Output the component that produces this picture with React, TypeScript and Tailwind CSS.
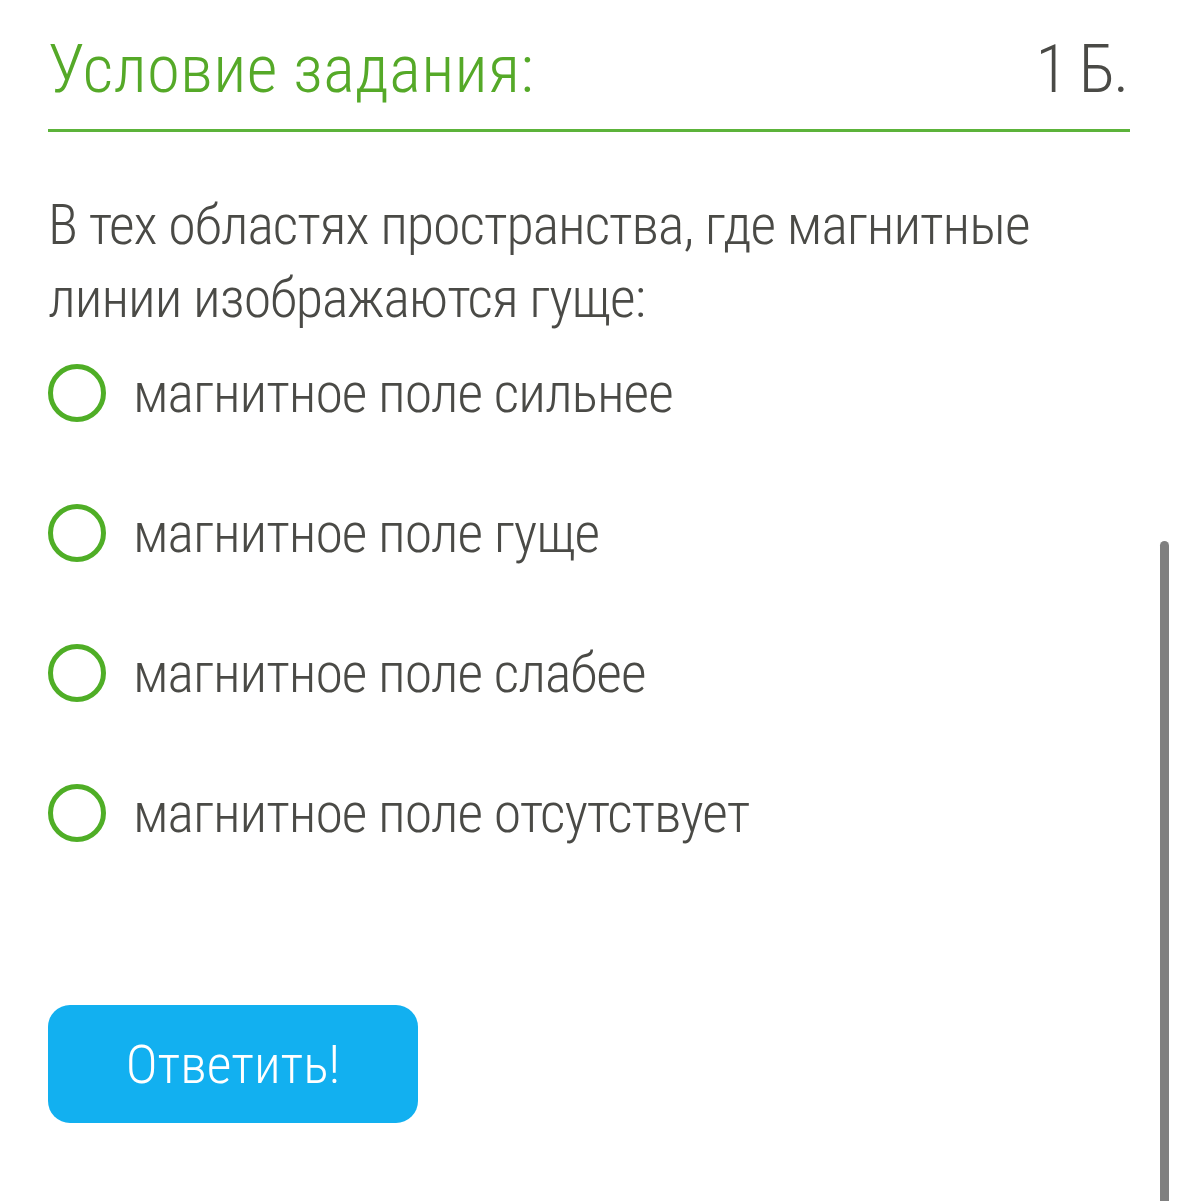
import React from "react";

const font = { fontFamily: '"Roboto Condensed", Roboto, "Noto Sans", sans-serif' };

function Radio() {
  return (
    <div className="w-[58px] h-[58px] rounded-full border-[5px] border-[#4fae26] shrink-0" />
  );
}

export default function App() {
  const options = [
    "магнитное поле сильнее",
    "магнитное поле гуще",
    "магнитное поле слабее",
    "магнитное поле отсутствует",
  ];
  return (
    <div className="relative w-[1179px] h-[1201px] bg-white overflow-hidden [font-stretch:condensed]" style={font}>
      <div className="pl-[48px] pr-[49px]">
        <div className="flex items-end justify-between h-[132px] border-b-[3px] border-[#5cb33a] pb-[26px]">
          <span className="text-[67px] leading-none font-light text-[#55a928] tracking-[0.3px]">Условие задания:</span>
          <span className="text-[67px] leading-none font-light text-[#4a4a46] tracking-[-2.2px] pr-[3px]">1 Б.</span>
        </div>
        <p className="mt-[57px] text-[56px] leading-[73px] font-light text-[#4a4a46] tracking-[-1px]">
          В тех областях пространства, где магнитные линии изображаются гуще:
        </p>
        <div className="flex flex-col mt-[-12px]">
          {options.map((o) => (
            <div key={o} className="flex items-center h-[140px] gap-[27px]">
              <Radio />
              <span className="text-[56px] font-light text-[#4a4a46] tracking-[-1px]">{o}</span>
            </div>
          ))}
        </div>
        <button className="mt-[122px] w-[370px] h-[118px] rounded-[22px] bg-[#12b0f0] text-white text-[54px] font-light">
          Ответить!
        </button>
      </div>
      <div className="absolute left-[1160px] top-[541px] w-[9px] h-[680px] rounded-t-full bg-[#808080]" />
    </div>
  );
}
